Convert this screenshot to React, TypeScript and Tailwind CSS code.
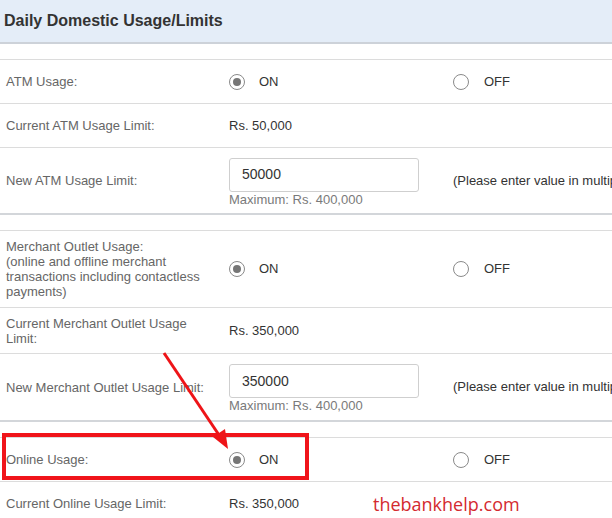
import React from "react"

function Radio({ checked }: { checked?: boolean }) {
  return (
    <span className="flex h-[16px] w-[16px] shrink-0 items-center justify-center rounded-full border border-[#8a8a8a] bg-white">
      {checked && <span className="h-[8px] w-[8px] rounded-full bg-[#767676]" />}
    </span>
  )
}

function Toggle({ on }: { on: boolean }) {
  return (
    <>
      <div className="flex items-center gap-[14px]">
        <Radio checked={on} />
        <span className="text-[#333]">ON</span>
      </div>
      <div className="flex items-center gap-[15px]">
        <Radio checked={!on} />
        <span className="text-[#333]">OFF</span>
      </div>
    </>
  )
}

function Row({ label, h, last, children }: { label: React.ReactNode; h: string; last?: boolean; children: React.ReactNode }) {
  return (
    <div
      className={`grid grid-cols-[229px_224px_1fr] items-center ${h} ${
        last ? "border-b-2 border-[#d3d6da]" : "border-b border-[#dcdcdc]"
      }`}
    >
      <div className="pl-[6px] pr-[12px] leading-[15px] text-[#666]">{label}</div>
      {children}
    </div>
  )
}

function LimitInput({ value }: { value: string }) {
  return (
    <>
      <div className="flex flex-col pt-[3px]">
        <div className="flex h-[34px] w-[190px] items-center rounded-[3px] border border-[#cfcfcf] pl-[12px] text-[14px] text-[#333]">
          {value}
        </div>
        <div className="leading-[15px] text-[#7a7a7a]">Maximum: Rs. 400,000</div>
      </div>
      <div className="whitespace-nowrap text-[#333]">(Please enter value in multiples of Rs. 500)</div>
    </>
  )
}

export default function App() {
  return (
    <div className="relative h-[518px] w-[612px] overflow-hidden bg-white font-['Liberation_Sans',Arial,sans-serif] text-[13px]">
      <div className="flex h-[42px] items-center bg-[#e4edf8] pl-[4px] text-[16px] font-bold text-[#333]">
        Daily Domestic Usage/Limits
      </div>
      <div className="h-[2px] bg-[#cdd2d9]" />

      <div className="mt-[15px] border-t border-[#dcdcdc]">
        <Row label="ATM Usage:" h="h-[44px]">
          <Toggle on />
        </Row>
        <Row label="Current ATM Usage Limit:" h="h-[44px]">
          <div className="text-[#333]">Rs. 50,000</div>
        </Row>
        <Row label="New ATM Usage Limit:" h="h-[67px]" last>
          <LimitInput value="50000" />
        </Row>
      </div>

      <div className="mt-[15px] border-t border-[#dcdcdc]">
        <Row
          label={
            <>
              Merchant Outlet Usage:
              <br />
              (online and offline merchant transactions including contactless payments)
            </>
          }
          h="h-[77px]"
        >
          <Toggle on />
        </Row>
        <Row label="Current Merchant Outlet Usage Limit:" h="h-[46px]">
          <div className="text-[#333]">Rs. 350,000</div>
        </Row>
        <Row label="New Merchant Outlet Usage Limit:" h="h-[68px]" last>
          <LimitInput value="350000" />
        </Row>
      </div>

      <div className="mt-[15px] border-t border-[#dcdcdc]">
        <Row label="Online Usage:" h="h-[44px]">
          <Toggle on />
        </Row>
        <Row label="Current Online Usage Limit:" h="h-[44px]">
          <div className="text-[#333]">Rs. 350,000</div>
        </Row>
      </div>

      {/* annotation overlay */}
      <div className="absolute left-[2px] top-[433px] h-[47px] w-[307px] border-[4px] border-[#f0141a]" />
      <svg className="absolute left-0 top-0" width="612" height="518" viewBox="0 0 612 518">
        <line x1="164" y1="353" x2="221" y2="438" stroke="#ee1418" strokeWidth="3" />
        <polygon points="228,449 213,437 225,429" fill="#ee1418" />
      </svg>
      <div className="absolute left-[373px] top-[492px] font-['Open_Sans',sans-serif] text-[18px] leading-[24px] text-[#d42a2f]">
        thebankhelp.com
      </div>
    </div>
  )
}
